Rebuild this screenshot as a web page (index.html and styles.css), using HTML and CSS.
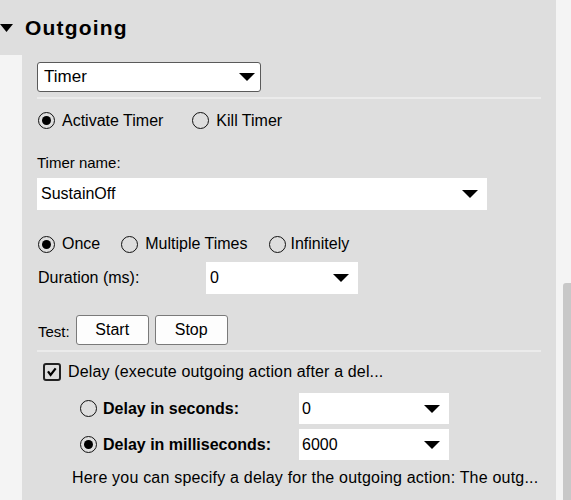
FILE: index.html
```html
<!DOCTYPE html>
<html>
<head>
<meta charset="utf-8">
<link rel="stylesheet" href="styles.css">
</head>
<body>
<div class="page">
  <div class="panel">
    <div class="header">
      <svg class="caret" width="13" height="8" viewBox="0 0 13 8"><polygon points="0,0 13,0 6.5,8" fill="#000"/></svg>
      <span class="title">Outgoing</span>
    </div>
    <div class="body">
      <div class="gutter"></div>
      <div class="content">
        <div class="select bordered type-select"><span>Timer</span><i class="arrow"></i></div>
        <div class="rule"></div>
        <div class="radios r1">
          <label class="radio"><span class="dot on"></span>Activate Timer</label>
          <label class="radio"><span class="dot"></span>Kill Timer</label>
        </div>
        <div class="field-label">Timer name:</div>
        <div class="select name-select"><span>SustainOff</span><i class="arrow"></i></div>
        <div class="radios r2">
          <label class="radio"><span class="dot on"></span>Once</label>
          <label class="radio"><span class="dot"></span>Multiple Times</label>
          <label class="radio"><span class="dot"></span>Infinitely</label>
        </div>
        <div class="duration-row">
          <span class="duration-label">Duration (ms):</span>
          <div class="select dur-select"><span>0</span><i class="arrow"></i></div>
        </div>
        <div class="test-row">
          <span class="test-label">Test:</span>
          <button class="btn">Start</button>
          <button class="btn">Stop</button>
        </div>
        <div class="rule rule2"></div>
        <div class="check-row">
          <span class="checkbox"><svg width="14" height="14" viewBox="0 0 14 14"><path d="M3.6 7.2 L5.6 10 L10 4.2" fill="none" stroke="#000" stroke-width="2.2" stroke-linecap="square" stroke-linejoin="miter"/></svg></span>
          <span class="check-text">Delay (execute outgoing action after a del...</span>
        </div>
        <div class="delay-row first">
          <label class="radio strong"><span class="dot"></span>Delay in seconds:</label>
          <div class="select delay-select"><span>0</span><i class="arrow"></i></div>
        </div>
        <div class="delay-row">
          <label class="radio strong"><span class="dot on"></span>Delay in milliseconds:</label>
          <div class="select delay-select"><span>6000</span><i class="arrow"></i></div>
        </div>
        <div class="help">Here you can specify a delay for the outgoing action: The outg...</div>
      </div>
    </div>
  </div>
  <div class="scrollbar"><div class="thumb"></div></div>
</div>
</body>
</html>
```

FILE: styles.css
```css
* { box-sizing: border-box; }
html, body { margin: 0; padding: 0; }
body {
  background: #f4f4f4;
  font-family: "Liberation Sans", Arial, sans-serif;
  font-size: 16px;
  color: #000;
  overflow: hidden;
  width: 571px;
  height: 500px;
}
.page { display: flex; height: 500px; }
.panel { width: 556px; background: #dedede; display: flex; flex-direction: column; }
.header { height: 55px; display: flex; align-items: center; padding-top: 1px; }
.caret { margin-left: 0; margin-right: 12px; }
.title { font-size: 21px; font-weight: bold; letter-spacing: 1.2px; }
.body { flex: 1; display: flex; }
.gutter { width: 22px; background: #f4f4f4; }
.content { flex: 1; padding: 0 15px; display: flex; flex-direction: column; }

.select {
  background: #fff;
  display: flex;
  align-items: center;
  justify-content: space-between;
  padding: 0 9px 0 4px;
}
.arrow {
  width: 0; height: 0;
  border-left: 8px solid transparent;
  border-right: 8px solid transparent;
  border-top: 8px solid #000;
}
.bordered { border: 1px solid #5a5a5a; border-radius: 3px; }
.type-select { margin-top: 7px; width: 224px; height: 30px; padding: 0 5px 0 6px; font-size: 17px; }
.rule { height: 2px; background: #ebebeb; margin-top: 5px; }

.radios { display: flex; align-items: center; }
.r1 { height: 43px; }
.r1 .radio + .radio { margin-left: 29px; }
.radio { display: inline-flex; align-items: center; gap: 7px; margin-left: 1px; }
.dot {
  width: 17px; height: 17px;
  border: 1.6px solid #111;
  border-radius: 50%;
  display: inline-flex;
  align-items: center;
  justify-content: center;
  background: transparent;
}
.dot.on::after {
  content: "";
  width: 9px; height: 9px;
  border-radius: 50%;
  background: #000;
}
.field-label { font-size: 15px; line-height: 18px; padding-top: 12px; padding-bottom: 6px; }
.name-select { height: 32px; width: 450px; }
.r2 { margin-top: 24px; height: 20px; }
.r2 .radio + .radio { margin-left: 21px; }
.r2 .radio:last-child { gap: 5px; }

.duration-row { margin-top: 8px; height: 32px; display: flex; align-items: center; }
.duration-label { width: 168px; margin-left: 1px; }
.dur-select { width: 152px; height: 32px; }

.test-row { margin-top: 21px; height: 30px; display: flex; align-items: center; }
.test-label { font-size: 15px; margin-left: 1px; margin-right: 6px; padding-top: 2px; }
.btn {
  font-family: "Liberation Sans", Arial, sans-serif;
  font-size: 16px;
  width: 73px; height: 30px;
  background: #fdfdfd;
  border: 1px solid #7a7a7a;
  border-radius: 3px;
  color: #000;
  padding: 0 0 1px;
  margin-right: 6px;
}
.rule2 { margin-top: 5px; }

.check-row { height: 40px; display: flex; align-items: center; padding-left: 6px; }
.checkbox {
  width: 18px; height: 18px;
  border: 2px solid #222;
  border-radius: 3px;
  display: inline-flex;
  align-items: center;
  justify-content: center;
  margin-right: 7px;
}
.check-text { letter-spacing: 0.15px; }

.delay-row { display: flex; align-items: center; height: 31px; margin-top: 5px; padding-left: 42px; }
.delay-row.first { margin-top: 1px; }
.strong { font-weight: bold; width: 219px; gap: 6px; }
.delay-select { width: 150px; height: 31px; padding-left: 3px; }

.help { height: 36px; display: flex; align-items: center; padding-left: 35px; white-space: nowrap; letter-spacing: 0.2px; }

.scrollbar { width: 15px; background: #f4f4f4; }
.thumb { margin-top: 283px; margin-left: 7px; width: 10px; height: 217px; background: #c8c8c8; border-radius: 3px 3px 0 0; }
```
